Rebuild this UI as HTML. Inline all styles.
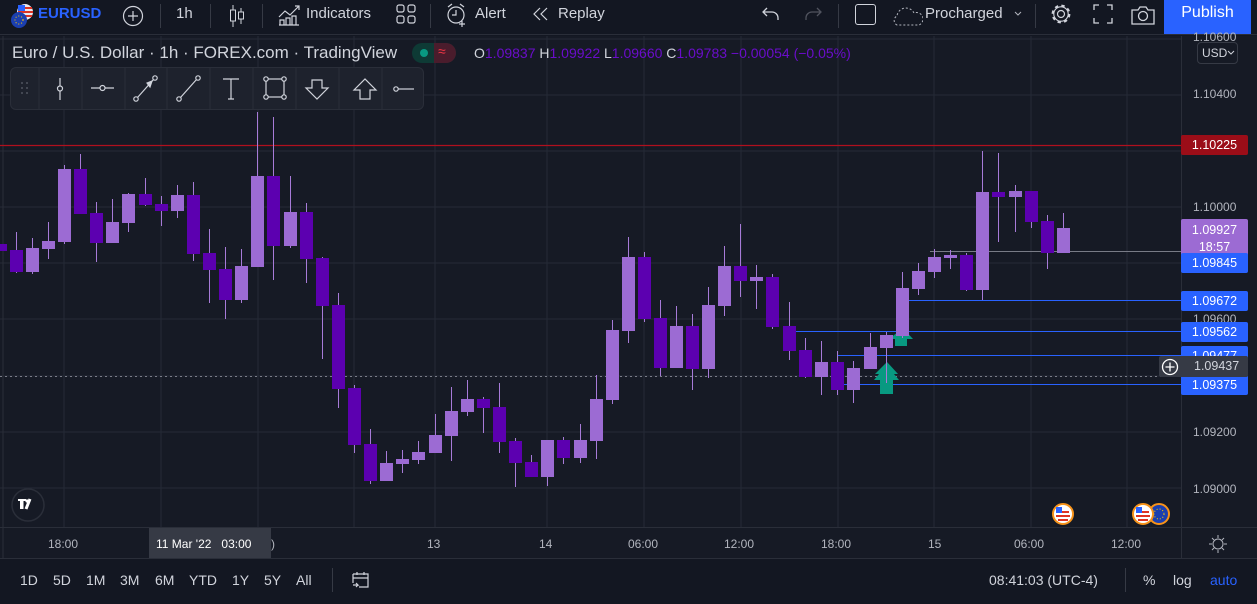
<!DOCTYPE html>
<html><head><meta charset="utf-8"><style>
*{margin:0;padding:0;box-sizing:border-box}
body{width:1257px;height:604px;background:#131722;font-family:"Liberation Sans",sans-serif;color:#d1d4dc;position:relative;overflow:hidden}
.abs{position:absolute}
.t{position:absolute;white-space:nowrap}
.sep{position:absolute;width:1px;background:#363a45}
.hd{font-size:15px;color:#d1d4dc;top:5px}
.ax{font-size:12px;color:#b2b5be}
.pl{position:absolute;left:1181px;width:67px;height:20px;font-size:12.5px;color:#fff;text-align:center;line-height:20px;border-radius:2px}
.bt{font-size:14px;color:#d1d4dc;top:572px}
</style></head><body>
<!-- header -->
<div class="abs" style="left:0;top:0;width:1257px;height:35px;background:#131722;border-bottom:1px solid #2a2e39"></div>
<svg class="abs" style="left:10px;top:3px" width="26" height="28" viewBox="0 0 26 28">
<circle cx="15" cy="9" r="8" fill="#e8e8f0"/><path d="M9 5h13M8 9h15M9 13h13" stroke="#d32" stroke-width="2"/><rect x="8" y="2" width="7" height="6" fill="#2962ff"/>
<circle cx="9" cy="17" r="8" fill="#1b3fb0"/><circle cx="9" cy="17" r="4" fill="none" stroke="#fc0" stroke-width="1" stroke-dasharray="1 2"/></svg>
<div class="t" style="left:38px;top:5px;font-size:15px;font-weight:bold;color:#2962ff">EURUSD</div>
<svg class="abs" style="left:122px;top:5px" width="22" height="22"><circle cx="11" cy="11" r="9.5" fill="none" stroke="#d1d4dc" stroke-width="1.2"/><path d="M11 6v10M6 11h10" stroke="#d1d4dc" stroke-width="1.2"/></svg>
<div class="sep" style="left:160px;top:4px;height:24px"></div>
<div class="t hd" style="left:176px">1h</div>
<div class="sep" style="left:210px;top:4px;height:24px"></div>
<svg class="abs" style="left:228px;top:3px" width="18" height="26"><path d="M5 2v22M13 5v16" stroke="#d1d4dc"/><rect x="2.5" y="7" width="5" height="11" fill="#131722" stroke="#d1d4dc"/><rect x="10.5" y="9" width="5" height="7" fill="#131722" stroke="#d1d4dc"/></svg>
<div class="sep" style="left:262px;top:4px;height:24px"></div>
<svg class="abs" style="left:278px;top:3px" width="22" height="24"><path d="M1 14l6-6 5 4 9-9M17 3h4v4" fill="none" stroke="#d1d4dc" stroke-width="1.2"/><path d="M2 22v-5h4v5M8 22v-7h4v7M14 22v-9h4v9M1 22h20" fill="none" stroke="#d1d4dc" stroke-width="1.2"/></svg>
<div class="t hd" style="left:306px">Indicators</div>
<svg class="abs" style="left:396px;top:4px" width="20" height="20"><g fill="none" stroke="#d1d4dc" stroke-width="1.2"><rect x="1" y="1" width="7" height="7" rx="2"/><rect x="12" y="1" width="7" height="7" rx="2"/><rect x="1" y="12" width="7" height="7" rx="2"/><rect x="12" y="12" width="7" height="7" rx="2"/></g></svg>
<div class="sep" style="left:430px;top:4px;height:24px"></div>
<svg class="abs" style="left:445px;top:2px" width="24" height="26"><g fill="none" stroke="#d1d4dc" stroke-width="1.2"><circle cx="11" cy="13" r="8"/><path d="M11 8v5h-4M3 5l4-3M19 5l-4-3M17 19v6M14 22h6"/></g></svg>
<div class="t hd" style="left:475px">Alert</div>
<svg class="abs" style="left:532px;top:6px" width="18" height="16"><path d="M8 2L2 8l6 6M15 2L9 8l6 6" fill="none" stroke="#d1d4dc" stroke-width="1.2"/></svg>
<div class="t hd" style="left:558px">Replay</div>
<svg class="abs" style="left:761px;top:5px" width="20" height="18"><path d="M6 3L2 7l4 4M2 7h9a6 6 0 0 1 6 6v2" fill="none" stroke="#d1d4dc" stroke-width="1.3"/></svg>
<svg class="abs" style="left:803px;top:5px" width="20" height="18"><path d="M14 3l4 4-4 4M18 7H9a6 6 0 0 0-6 6v2" fill="none" stroke="#50535e" stroke-width="1.3"/></svg>
<div class="sep" style="left:838px;top:4px;height:24px"></div>
<div class="abs" style="left:855px;top:4px;width:21px;height:21px;border:1.3px solid #d1d4dc;border-radius:3px"></div>
<svg class="abs" style="left:893px;top:5px" width="30" height="22"><path d="M4 20a5 5 0 0 1 0-9a9 9 0 0 1 17-3a6 6 0 0 1 5 12z" fill="none" stroke="#b2b5be" stroke-dasharray="2 2"/></svg>
<div class="t hd" style="left:925px">Procharged</div>
<svg class="abs" style="left:1013px;top:10px" width="10" height="8"><path d="M2 2l3 3 3-3" fill="none" stroke="#b2b5be"/></svg>
<div class="sep" style="left:1035px;top:4px;height:24px"></div>
<svg class="abs" style="left:1049px;top:2px" width="24" height="24"><circle cx="12" cy="12" r="8" fill="none" stroke="#d1d4dc" stroke-width="2.8" stroke-dasharray="3.2 3.1"/><circle cx="12" cy="12" r="7.2" fill="#131722"/><circle cx="12" cy="12" r="7.2" fill="none" stroke="#d1d4dc" stroke-width="1.1"/><circle cx="12" cy="12" r="3.5" fill="none" stroke="#d1d4dc" stroke-width="1.2"/></svg>
<svg class="abs" style="left:1093px;top:4px" width="20" height="20"><path d="M1 6V1h5M14 1h5v5M19 14v5h-5M6 19H1v-5" fill="none" stroke="#d1d4dc" stroke-width="1.3"/></svg>
<svg class="abs" style="left:1130px;top:3px" width="26" height="24"><path d="M2 7h6l2-3h6l2 3h6v14H2z" fill="none" stroke="#d1d4dc" stroke-width="1.3"/><circle cx="13" cy="13" r="4.5" fill="none" stroke="#d1d4dc" stroke-width="1.3"/></svg>
<div class="abs" style="left:1164px;top:0;width:87px;height:34px;background:#2962ff;color:#fff;font-size:16px;text-align:center;line-height:25px">Publish</div>

<!-- chart -->
<svg class="abs" style="left:0;top:36px" width="1257" height="568">
<rect x="0" y="0" width="1257" height="568" fill="#161a25"/>
<g stroke="#252a36" stroke-width="1">
<path d="M64 0v491M161 0v491M258 0v491M354 0v491M435 0v491M547 0v491M644 0v491M741 0v491M838 0v491M934 0v491M1031 0v491M1127 0v491"/>
<path d="M0 3h1181M0 59h1181M0 115h1181M0 171h1181M0 227h1181M0 283h1181M0 340h1181M0 396h1181M0 452h1181"/>
</g>
<path d="M1181.5 0v522" stroke="#2a2e39"/>
<path d="M0 491.5h1257M0 522.5h1257" stroke="#2a2e39"/>
<path d="M3 0v568" stroke="#2a2e39" stroke-width="1"/>
</svg>
<svg class="abs" style="left:0;top:0" width="1257" height="604">
<path d="M0 145.5h1181" stroke="#b0101e" stroke-width="1.2"/>
<path d="M930 251.5h251" stroke="#787b86"/>
<path d="M908 300.5h273M795 331.5h386M838 355.5h343M843 384.5h338" stroke="#2962ff"/>
<path d="M0 376.5h1181" stroke="#7a7d88" stroke-dasharray="2 3"/>
<g>
<g fill="#a77bd8">
<rect x="16" y="232" width="1" height="41"/><rect x="32" y="238" width="1" height="36"/><rect x="48" y="222" width="1" height="37"/><rect x="64" y="165" width="1" height="79"/><rect x="80" y="154" width="1" height="60"/><rect x="96" y="202" width="1" height="60"/><rect x="112" y="199" width="1" height="44"/><rect x="128" y="193" width="1" height="39"/><rect x="145" y="178" width="1" height="28"/><rect x="161" y="196" width="1" height="30"/><rect x="177" y="185" width="1" height="33"/><rect x="193" y="182" width="1" height="79"/><rect x="209" y="229" width="1" height="74"/><rect x="225" y="247" width="1" height="72"/><rect x="241" y="249" width="1" height="54"/><rect x="257" y="112" width="1" height="155"/><rect x="273" y="117" width="1" height="163"/><rect x="290" y="176" width="1" height="72"/><rect x="306" y="203" width="1" height="80"/><rect x="322" y="257" width="1" height="102"/><rect x="338" y="293" width="1" height="115"/><rect x="354" y="385" width="1" height="68"/><rect x="370" y="429" width="1" height="55"/><rect x="386" y="451" width="1" height="30"/><rect x="402" y="450" width="1" height="23"/><rect x="418" y="441" width="1" height="23"/>
<rect x="435" y="414" width="1" height="39"/><rect x="451" y="387" width="1" height="74"/><rect x="467" y="380" width="1" height="36"/><rect x="483" y="397" width="1" height="36"/><rect x="499" y="383" width="1" height="70"/><rect x="515" y="438" width="1" height="49"/><rect x="531" y="455" width="1" height="22"/><rect x="547" y="440" width="1" height="46"/><rect x="563" y="437" width="1" height="27"/><rect x="580" y="424" width="1" height="39"/><rect x="596" y="375" width="1" height="84"/><rect x="612" y="320" width="1" height="84"/><rect x="628" y="237" width="1" height="106"/><rect x="644" y="252" width="1" height="70"/><rect x="660" y="300" width="1" height="76"/><rect x="676" y="306" width="1" height="62"/><rect x="692" y="314" width="1" height="76"/><rect x="708" y="287" width="1" height="91"/><rect x="724" y="246" width="1" height="70"/><rect x="740" y="224" width="1" height="73"/><rect x="756" y="265" width="1" height="44"/><rect x="772" y="274" width="1" height="55"/><rect x="789" y="302" width="1" height="58"/><rect x="805" y="338" width="1" height="40"/><rect x="821" y="341" width="1" height="54"/><rect x="837" y="351" width="1" height="44"/><rect x="853" y="361" width="1" height="42"/>
</g>
<g fill="#089981">
<path d="M887 362l11 12h-4l5 6h-6v14h-13v-14h-6l5-6h-4z"/>
<path d="M903 328l10 11h-6v7h-12v-7h-6z"/>
</g>
<g fill="#a77bd8"><rect x="870" y="333" width="1" height="36"/><rect x="886" y="332" width="1" height="51"/><rect x="902" y="272" width="1" height="66"/><rect x="918" y="263" width="1" height="32"/><rect x="934" y="249" width="1" height="29"/><rect x="950" y="250" width="1" height="19"/><rect x="966" y="253" width="1" height="38"/><rect x="982" y="151" width="1" height="149"/><rect x="998" y="153" width="1" height="89"/><rect x="1015" y="185" width="1" height="47"/><rect x="1031" y="191" width="1" height="37"/><rect x="1047" y="215" width="1" height="54"/><rect x="1063" y="213" width="1" height="40"/></g>
<g fill="#5c00b0">
<rect x="0" y="244" width="7" height="7"/><rect x="10" y="250" width="13" height="22"/><rect x="74" y="169" width="13" height="45"/><rect x="90" y="213" width="13" height="30"/><rect x="139" y="194" width="13" height="11"/><rect x="155" y="204" width="13" height="7"/><rect x="187" y="195" width="13" height="59"/><rect x="203" y="253" width="13" height="17"/><rect x="219" y="269" width="13" height="31"/><rect x="267" y="176" width="13" height="70"/><rect x="300" y="212" width="13" height="47"/><rect x="316" y="258" width="13" height="48"/><rect x="332" y="305" width="13" height="84"/><rect x="348" y="388" width="13" height="57"/><rect x="364" y="444" width="13" height="37"/>
<rect x="477" y="399" width="13" height="9"/><rect x="493" y="407" width="13" height="35"/><rect x="509" y="441" width="13" height="22"/><rect x="525" y="462" width="13" height="15"/><rect x="557" y="440" width="13" height="18"/><rect x="638" y="257" width="13" height="62"/><rect x="654" y="318" width="13" height="50"/><rect x="686" y="326" width="13" height="43"/><rect x="734" y="266" width="13" height="15"/><rect x="766" y="277" width="13" height="50"/><rect x="783" y="326" width="13" height="25"/><rect x="799" y="350" width="13" height="27"/><rect x="831" y="362" width="13" height="28"/>
<rect x="960" y="255" width="13" height="35"/><rect x="992" y="192" width="13" height="5"/><rect x="1025" y="191" width="13" height="31"/><rect x="1041" y="221" width="13" height="32"/>
</g>
<g fill="#9c6bd3">
<rect x="26" y="248" width="13" height="24"/><rect x="42" y="241" width="13" height="8"/><rect x="58" y="169" width="13" height="73"/><rect x="106" y="222" width="13" height="21"/><rect x="122" y="194" width="13" height="29"/><rect x="171" y="195" width="13" height="16"/><rect x="235" y="266" width="13" height="34"/><rect x="251" y="176" width="13" height="91"/><rect x="284" y="212" width="13" height="34"/><rect x="380" y="463" width="13" height="18"/><rect x="396" y="459" width="13" height="5"/><rect x="412" y="452" width="13" height="8"/>
<rect x="429" y="435" width="13" height="18"/><rect x="445" y="411" width="13" height="25"/><rect x="461" y="399" width="13" height="13"/><rect x="541" y="440" width="13" height="37"/><rect x="574" y="440" width="13" height="18"/><rect x="590" y="399" width="13" height="42"/><rect x="606" y="330" width="13" height="70"/><rect x="622" y="257" width="13" height="74"/><rect x="670" y="326" width="13" height="42"/><rect x="702" y="305" width="13" height="64"/><rect x="718" y="266" width="13" height="40"/><rect x="750" y="277" width="13" height="4"/><rect x="815" y="362" width="13" height="15"/><rect x="847" y="368" width="13" height="22"/>
<rect x="864" y="347" width="13" height="22"/><rect x="880" y="335" width="13" height="13"/><rect x="896" y="288" width="13" height="48"/><rect x="912" y="271" width="13" height="18"/><rect x="928" y="257" width="13" height="15"/><rect x="944" y="255" width="13" height="3"/><rect x="976" y="192" width="13" height="98"/><rect x="1009" y="191" width="13" height="6"/><rect x="1057" y="228" width="13" height="25"/>
</g>
</g>
<circle cx="28" cy="505" r="16" fill="#161a25" stroke="#2a2e39" stroke-width="1.5"/>
<path d="M20 501h3M22 501v8" stroke="#fff" stroke-width="3"/><path d="M30 499l-4 10" stroke="#fff" stroke-width="3"/><circle cx="27" cy="501" r="1.6" fill="#fff"/><path d="M18 499h8v2h-3v8h-3v-8h-2z" fill="#fff"/>
<g stroke="#f7931a" stroke-width="2">
<circle cx="1063" cy="514" r="10" fill="#fff"/><circle cx="1159" cy="514" r="10" fill="#1b3fb0"/><circle cx="1143" cy="514" r="10" fill="#fff"/>
</g>
<g stroke="#d32" stroke-width="2"><path d="M1057 512h12M1056 516h14M1058 520h10M1137 512h12M1136 516h14M1138 520h10"/></g>
<rect x="1056" y="507" width="6" height="6" fill="#2962ff"/><rect x="1136" y="507" width="6" height="6" fill="#2962ff"/>
<circle cx="1159" cy="514" r="5" fill="none" stroke="#fc0" stroke-dasharray="1 2"/>
</svg>

<div class="t" style="left:12px;top:43px;font-size:17px;color:#d1d4dc">Euro / U.S. Dollar · 1h · FOREX.com · TradingView</div>
<div class="abs" style="left:412px;top:43px;width:44px;height:20px;border-radius:10px;background:#0e3a35;overflow:hidden"><div class="abs" style="left:22px;top:0;width:22px;height:20px;background:#4a1c2c"></div><div class="abs" style="left:8px;top:6px;width:8px;height:8px;border-radius:50%;background:#089981"></div><div class="t" style="left:26px;top:0;font-size:14px;color:#f23645">≈</div></div>
<div class="t" style="left:474px;top:45px;font-size:14px;color:#d1d4dc">O<span style="color:#6a0dca">1.09837</span> H<span style="color:#6a0dca">1.09922</span> L<span style="color:#6a0dca">1.09660</span> C<span style="color:#6a0dca">1.09783</span> <span style="color:#6a0dca">−0.00054 (−0.05%)</span></div>
<div class="abs" style="left:10px;top:67px;width:414px;height:43px;background:#1e222d;border:1px solid #2a2e39;border-radius:6px"></div>
<svg class="abs" style="left:10px;top:67px" width="414" height="43"><g stroke="#2a2e39"><path d="M29 0v43M72 0v43M115 0v43M157 0v43M200 0v43M243 0v43M286 0v43M329 0v43M372 0v43"/></g>
<g fill="#50535e"><circle cx="12" cy="16" r="1"/><circle cx="17" cy="16" r="1"/><circle cx="12" cy="21" r="1"/><circle cx="17" cy="21" r="1"/><circle cx="12" cy="26" r="1"/><circle cx="17" cy="26" r="1"/></g>
<g fill="none" stroke="#d1d4dc" stroke-width="1.2">
<path d="M50 11v8M50 24v9"/><circle cx="50" cy="21.5" r="2.5"/>
<path d="M81 21h9M95 21h9"/><circle cx="92.5" cy="21" r="2.5"/>
<circle cx="126" cy="32" r="2.2"/><circle cx="145" cy="11" r="2.2"/><path d="M127.5 30.5l16-18"/><path d="M137 16l5-2-2 6z" fill="#d1d4dc"/>
<circle cx="169" cy="32" r="2.2"/><circle cx="188" cy="11" r="2.2"/><path d="M170.5 30.5l16-18"/>
<path d="M213 12h16M221 12v20M218 32h6"/>
<rect x="256" y="12" width="18" height="18"/><circle cx="256" cy="12" r="2.2" fill="#1e222d"/><circle cx="274" cy="12" r="2.2" fill="#1e222d"/><circle cx="256" cy="30" r="2.2" fill="#1e222d"/><circle cx="274" cy="30" r="2.2" fill="#1e222d"/>
<path d="M302 13h10v8h6l-11 11-11-11h6z"/>
<path d="M350 32v-9h-6l11-11 11 11h-6v9z"/>
<circle cx="386" cy="22" r="2.2"/><path d="M388 22h16"/></g></svg>

<div class="t ax" style="left:1193px;top:30px">1.10600</div>
<div class="abs" style="left:1197px;top:42px;width:41px;height:22px;border:1px solid #363a45;border-radius:4px;background:#161a25"></div>
<div class="t" style="left:1202px;top:46px;font-size:12px;color:#d1d4dc">USD</div>
<svg class="abs" style="left:1227px;top:50px" width="8" height="6"><path d="M1 1l3 3 3-3" fill="none" stroke="#d1d4dc"/></svg>
<div class="t ax" style="left:1193px;top:87px">1.10400</div>
<div class="t ax" style="left:1193px;top:200px">1.10000</div>
<div class="t ax" style="left:1193px;top:312px">1.09600</div>
<div class="t ax" style="left:1193px;top:425px">1.09200</div>
<div class="t ax" style="left:1193px;top:482px">1.09000</div>
<div class="pl" style="top:135px;background:#9b0d18">1.10225</div>
<div class="pl" style="top:219px;height:43px;background:#9c6bd3;line-height:17px;padding-top:3px">1.09927<br>18:57</div>
<div class="pl" style="top:253px;background:#2962ff">1.09845</div>
<div class="pl" style="top:291px;background:#2962ff">1.09672</div>
<div class="pl" style="top:322px;background:#2962ff">1.09562</div>
<div class="pl" style="top:346px;background:#2962ff">1.09477</div>
<div class="pl" style="top:375px;background:#2962ff">1.09375</div>
<div class="abs" style="left:1159px;top:356px;width:89px;height:21px;background:#363a45;border-radius:2px"></div>
<div class="t" style="left:1194px;top:359px;font-size:12.5px;color:#d1d4dc">1.09437</div>
<svg class="abs" style="left:1161px;top:358px" width="18" height="18"><circle cx="9" cy="9" r="7.5" fill="none" stroke="#fff" stroke-width="1.3"/><path d="M9 4.5v9M4.5 9h9" stroke="#fff" stroke-width="1.3"/></svg>

<div class="t ax" style="left:48px;top:537px">18:00</div>
<div class="abs" style="left:149px;top:528px;width:122px;height:30px;background:#363a45"></div>
<div class="t" style="left:156px;top:537px;font-size:12px;color:#fff">11 Mar '22&nbsp;&nbsp; 03:00</div>
<div class="t ax" style="left:271px;top:537px">)</div>
<div class="t ax" style="left:427px;top:537px">13</div>
<div class="t ax" style="left:539px;top:537px">14</div>
<div class="t ax" style="left:628px;top:537px">06:00</div>
<div class="t ax" style="left:724px;top:537px">12:00</div>
<div class="t ax" style="left:821px;top:537px">18:00</div>
<div class="t ax" style="left:928px;top:537px">15</div>
<div class="t ax" style="left:1014px;top:537px">06:00</div>
<div class="t ax" style="left:1111px;top:537px">12:00</div>
<svg class="abs" style="left:1208px;top:534px" width="20" height="20"><circle cx="10" cy="10" r="5" fill="none" stroke="#b2b5be"/><path d="M10 1v3M10 16v3M1 10h3M16 10h3M4 4l2 2M14 14l2 2M16 4l-2 2M4 16l2-2" stroke="#b2b5be"/></svg>

<div class="abs" style="left:0;top:559px;width:1257px;height:45px;background:#131722"></div>
<div class="t bt" style="left:20px">1D</div>
<div class="t bt" style="left:53px">5D</div>
<div class="t bt" style="left:86px">1M</div>
<div class="t bt" style="left:120px">3M</div>
<div class="t bt" style="left:155px">6M</div>
<div class="t bt" style="left:189px">YTD</div>
<div class="t bt" style="left:232px">1Y</div>
<div class="t bt" style="left:264px">5Y</div>
<div class="t bt" style="left:296px">All</div>
<div class="sep" style="left:332px;top:568px;height:24px"></div>
<svg class="abs" style="left:351px;top:570px" width="20" height="20"><path d="M2 4h15v13H8M2 4v9M2 8h15M6 2v3M13 2v3M2 15h5l-2-2M7 15l-2 2" fill="none" stroke="#d1d4dc" stroke-width="1.2"/></svg>
<div class="t bt" style="left:989px">08:41:03 (UTC-4)</div>
<div class="sep" style="left:1125px;top:568px;height:24px"></div>
<div class="t bt" style="left:1143px">%</div>
<div class="t bt" style="left:1173px">log</div>
<div class="t bt" style="left:1210px;color:#2962ff">auto</div>
</body></html>
